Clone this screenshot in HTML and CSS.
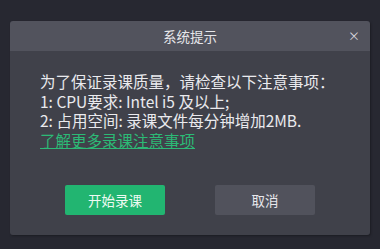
FILE: index.html
```html
<!DOCTYPE html>
<html lang="zh">
<head>
<meta charset="utf-8">
<link rel="stylesheet" href="styles.css">
</head>
<body>
<div class="dialog">
  <div class="header">
    <span class="title">系统提示</span>
    <span class="close">×</span>
  </div>
  <div class="body">
    <div class="content">
      <p>为了保证录课质量，请检查以下注意事项：</p>
      <p>1: CPU要求: Intel i5 及以上;</p>
      <p>2: 占用空间: 录课文件每分钟增加2MB.</p>
      <a class="link" href="#">了解更多录课注意事项</a>
    </div>
    <div class="actions">
      <button class="btn primary">开始录课</button>
      <button class="btn secondary">取消</button>
    </div>
  </div>
</div>
</body>
</html>
```
FILE: styles.css
```css
html, body {
  margin: 0;
  padding: 0;
}
body {
  width: 380px;
  height: 249px;
  background: #272831;
  font-family: "Noto Sans CJK SC", "Noto Sans", sans-serif;
  padding: 21px 10px 0;
  box-sizing: border-box;
  overflow: hidden;
}
.dialog {
  width: 360px;
  height: 214px;
  display: flex;
  flex-direction: column;
  border-radius: 3px;
  overflow: hidden;
  box-shadow: 1px 1px 2px #1c1d23;
}
.header {
  position: relative;
  height: 30px;
  background: #52535d;
  display: flex;
  align-items: center;
  justify-content: center;
}
.title {
  color: #e6e6ea;
  font-size: 13.5px;
}
.close {
  position: absolute;
  right: 10px;
  top: 7px;
  color: #d8d8de;
  font-size: 12px;
  line-height: 16px;
}
.body {
  flex: 1;
  background: #40414a;
  display: flex;
  flex-direction: column;
}
.content {
  padding: 21px 0 0 30px;
  color: #eaeaee;
  font-size: 15.5px;
  line-height: 19.5px;
}
.content p {
  margin: 0;
}
.link {
  color: #2cba76;
  text-decoration: underline;
}
.actions {
  display: flex;
  gap: 50px;
  padding: 35px 0 0 55px;
}
.btn {
  width: 100px;
  height: 30px;
  border: none;
  border-radius: 2px;
  font-family: inherit;
  font-size: 13.5px;
  padding: 0;
}
.primary {
  background: #22b571;
  color: #eefaf2;
}
.secondary {
  background: #51525c;
  color: #e8e8ec;
}
```
